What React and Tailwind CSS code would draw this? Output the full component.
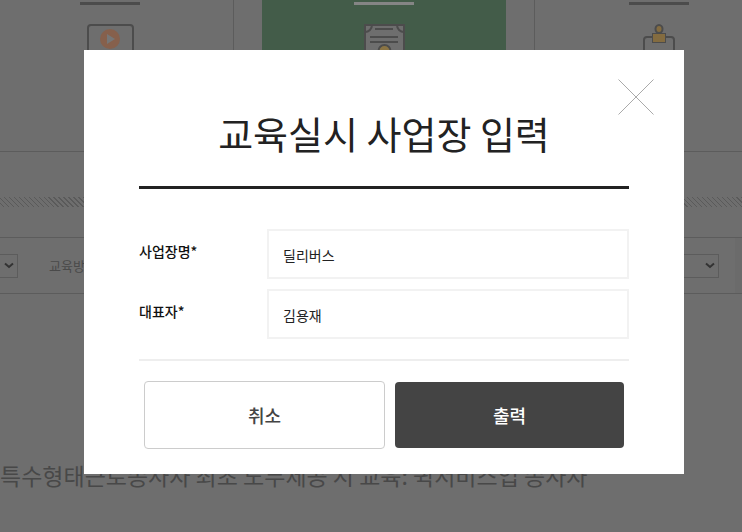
import React from 'react';

const FONT = "font-['Noto_Sans_CJK_KR','Noto_Sans',sans-serif]";

// top row icons, only the upper parts show above the modal
const VideoIcon = () => (
  <svg width="47" height="48" viewBox="0 0 47 48" fill="none" className="block">
    <rect x="1" y="1" width="45" height="45" rx="3" stroke="#4c4c4c" strokeWidth="2" />
    <circle cx="23" cy="15" r="10" fill="#86604c" />
    <path d="M20 10l8 5-8 5z" fill="#767676" />
  </svg>
);

const CertIcon = () => (
  <svg width="41" height="48" viewBox="0 0 41 48" fill="none" className="block">
    <path d="M1 1h39v40H1z" fill="#6e6e6e" stroke="#4c4c4c" strokeWidth="2" />
    <path d="M1 8a7 7 0 0 0 7-7M40 8a7 7 0 0 1-7-7" stroke="#4c4c4c" strokeWidth="2" />
    <path d="M11 5h18M6 13h28M6 18h28" stroke="#4c4c4c" strokeWidth="2" />
    <circle cx="20.5" cy="27" r="6" fill="#8a7444" stroke="#4c4c4c" strokeWidth="2" />
  </svg>
);

const StampIcon = () => (
  <svg width="32" height="44" viewBox="0 0 32 44" fill="none" className="block">
    <rect x="1" y="13" width="30" height="30" rx="3" stroke="#4c4c4c" strokeWidth="2" />
    <rect x="9.5" y="9.5" width="13" height="9" fill="#846c40" stroke="#4c4c4c" strokeWidth="1" />
    <ellipse cx="16" cy="5" rx="3.5" ry="4" fill="#846c40" stroke="#4c4c4c" strokeWidth="2" />
  </svg>
);

const Chevron = () => (
  <svg width="10" height="7" viewBox="0 0 10 7" fill="none">
    <path d="M1 1.5l4 3.5 4-3.5" stroke="#333" strokeWidth="2" />
  </svg>
);

const TopCol = ({ active, className, children }) => (
  <div className={`flex flex-col items-center h-[151px] ${active ? 'bg-[#435c49]' : ''} ${className}`}>
    <div className={`mt-[2px] w-[60px] h-[3px] ${active ? 'bg-[#858585]' : 'bg-[#4c4c4c]'}`} />
    <div className="mt-[19px]">{children}</div>
  </div>
);

// the page behind the modal, already dimmed
function Background() {
  return (
    <div className="h-[532px] w-[742px] overflow-hidden bg-[#6e6e6e]">
      <div className="flex border-b border-[#5c5c5c] h-[152px]">
        <div className="w-[234px] shrink-0 border-r border-[#5c5c5c]">
          <TopCol className="w-[220px]">
            <VideoIcon />
          </TopCol>
        </div>
        <TopCol active className="ml-[28px] w-[244px] shrink-0">
          <CertIcon />
        </TopCol>
        <div className="ml-[28px] flex-1 border-l border-[#5c5c5c] flex">
          <TopCol className="w-[247px] shrink-0">
            <StampIcon />
          </TopCol>
        </div>
      </div>

      <div
        className="mt-[45px] h-[10px]"
        style={{ background: 'repeating-linear-gradient(45deg, #6e6e6e 0 2.5px, #5a5a5a 2.5px 3.5px)' }}
      />

      <div className="mt-[30px] h-[57px] border-y border-[#5c5c5c] flex items-center">
        <div className="w-[18px] h-[24px] border border-l-0 border-[#5c5c5c] flex items-center justify-end pr-[3px]">
          <Chevron />
        </div>
        <div className="ml-[14px] w-[100px] h-full pl-[17px] flex items-center text-[13px] text-[#4a4a4a] whitespace-nowrap">
          교육방법
        </div>
        <div className="ml-auto w-[100px] h-[24px] border border-[#5c5c5c] flex items-center justify-end pr-[3px]">
          <Chevron />
        </div>
        <div className="ml-[16px] w-[7px] h-full bg-[#6b6b6b]" />
      </div>

      <p className="mt-[166px] text-[23px] leading-[30px] text-[#484848] whitespace-nowrap">
        특수형태근로종사자 최초 노무제공 시 교육: 퀵서비스업 종사자
      </p>
    </div>
  );
}

const Field = ({ label, value }) => (
  <div className="flex">
    <label className="w-[128px] shrink-0 pt-[10px] text-[14px] leading-[24px] font-medium text-[#111]">{label}*</label>
    <input
      readOnly
      value={value}
      className="w-[362px] h-[50px] border-2 border-[#f2f2f2] px-[14px] pt-[2px] text-[14px] text-[#222] outline-none"
    />
  </div>
);

export default function App() {
  return (
    <div className={`relative h-[532px] w-[742px] overflow-hidden ${FONT}`}>
      <Background />

      <div className="absolute left-[84px] top-[50px] w-[600px] h-[424px] bg-white px-[55px]">
        <button className="absolute right-[30px] top-[29px]">
          <svg width="36" height="36" viewBox="0 0 36 36" fill="none" className="block">
            <path d="M0.5 0.5l35 35M35.5 0.5l-35 35" stroke="#aaa" strokeWidth="1" />
          </svg>
        </button>

        <h1 className="pt-[53px] text-center text-[38px] leading-[60px] font-normal text-[#222]">교육실시 사업장 입력</h1>
        <div className="mt-[23px] h-[3px] bg-[#222]" />

        <div className="mt-[40px] flex flex-col gap-[10px]">
          <Field label="사업장명" value="딜리버스" />
          <Field label="대표자" value="김용재" />
        </div>

        <div className="mt-[20px] h-[2px] bg-[#eee]" />

        <div className="mt-[20px] flex items-center px-[5px] gap-[10px]">
          <button className="w-[241px] h-[68px] rounded-[4px] border border-[#ccc] bg-white text-[18px] font-medium text-[#444]">
            취소
          </button>
          <button className="w-[229px] h-[66px] rounded-[4px] bg-[#444] text-[18px] font-medium text-white">
            출력
          </button>
        </div>
      </div>
    </div>
  );
}
